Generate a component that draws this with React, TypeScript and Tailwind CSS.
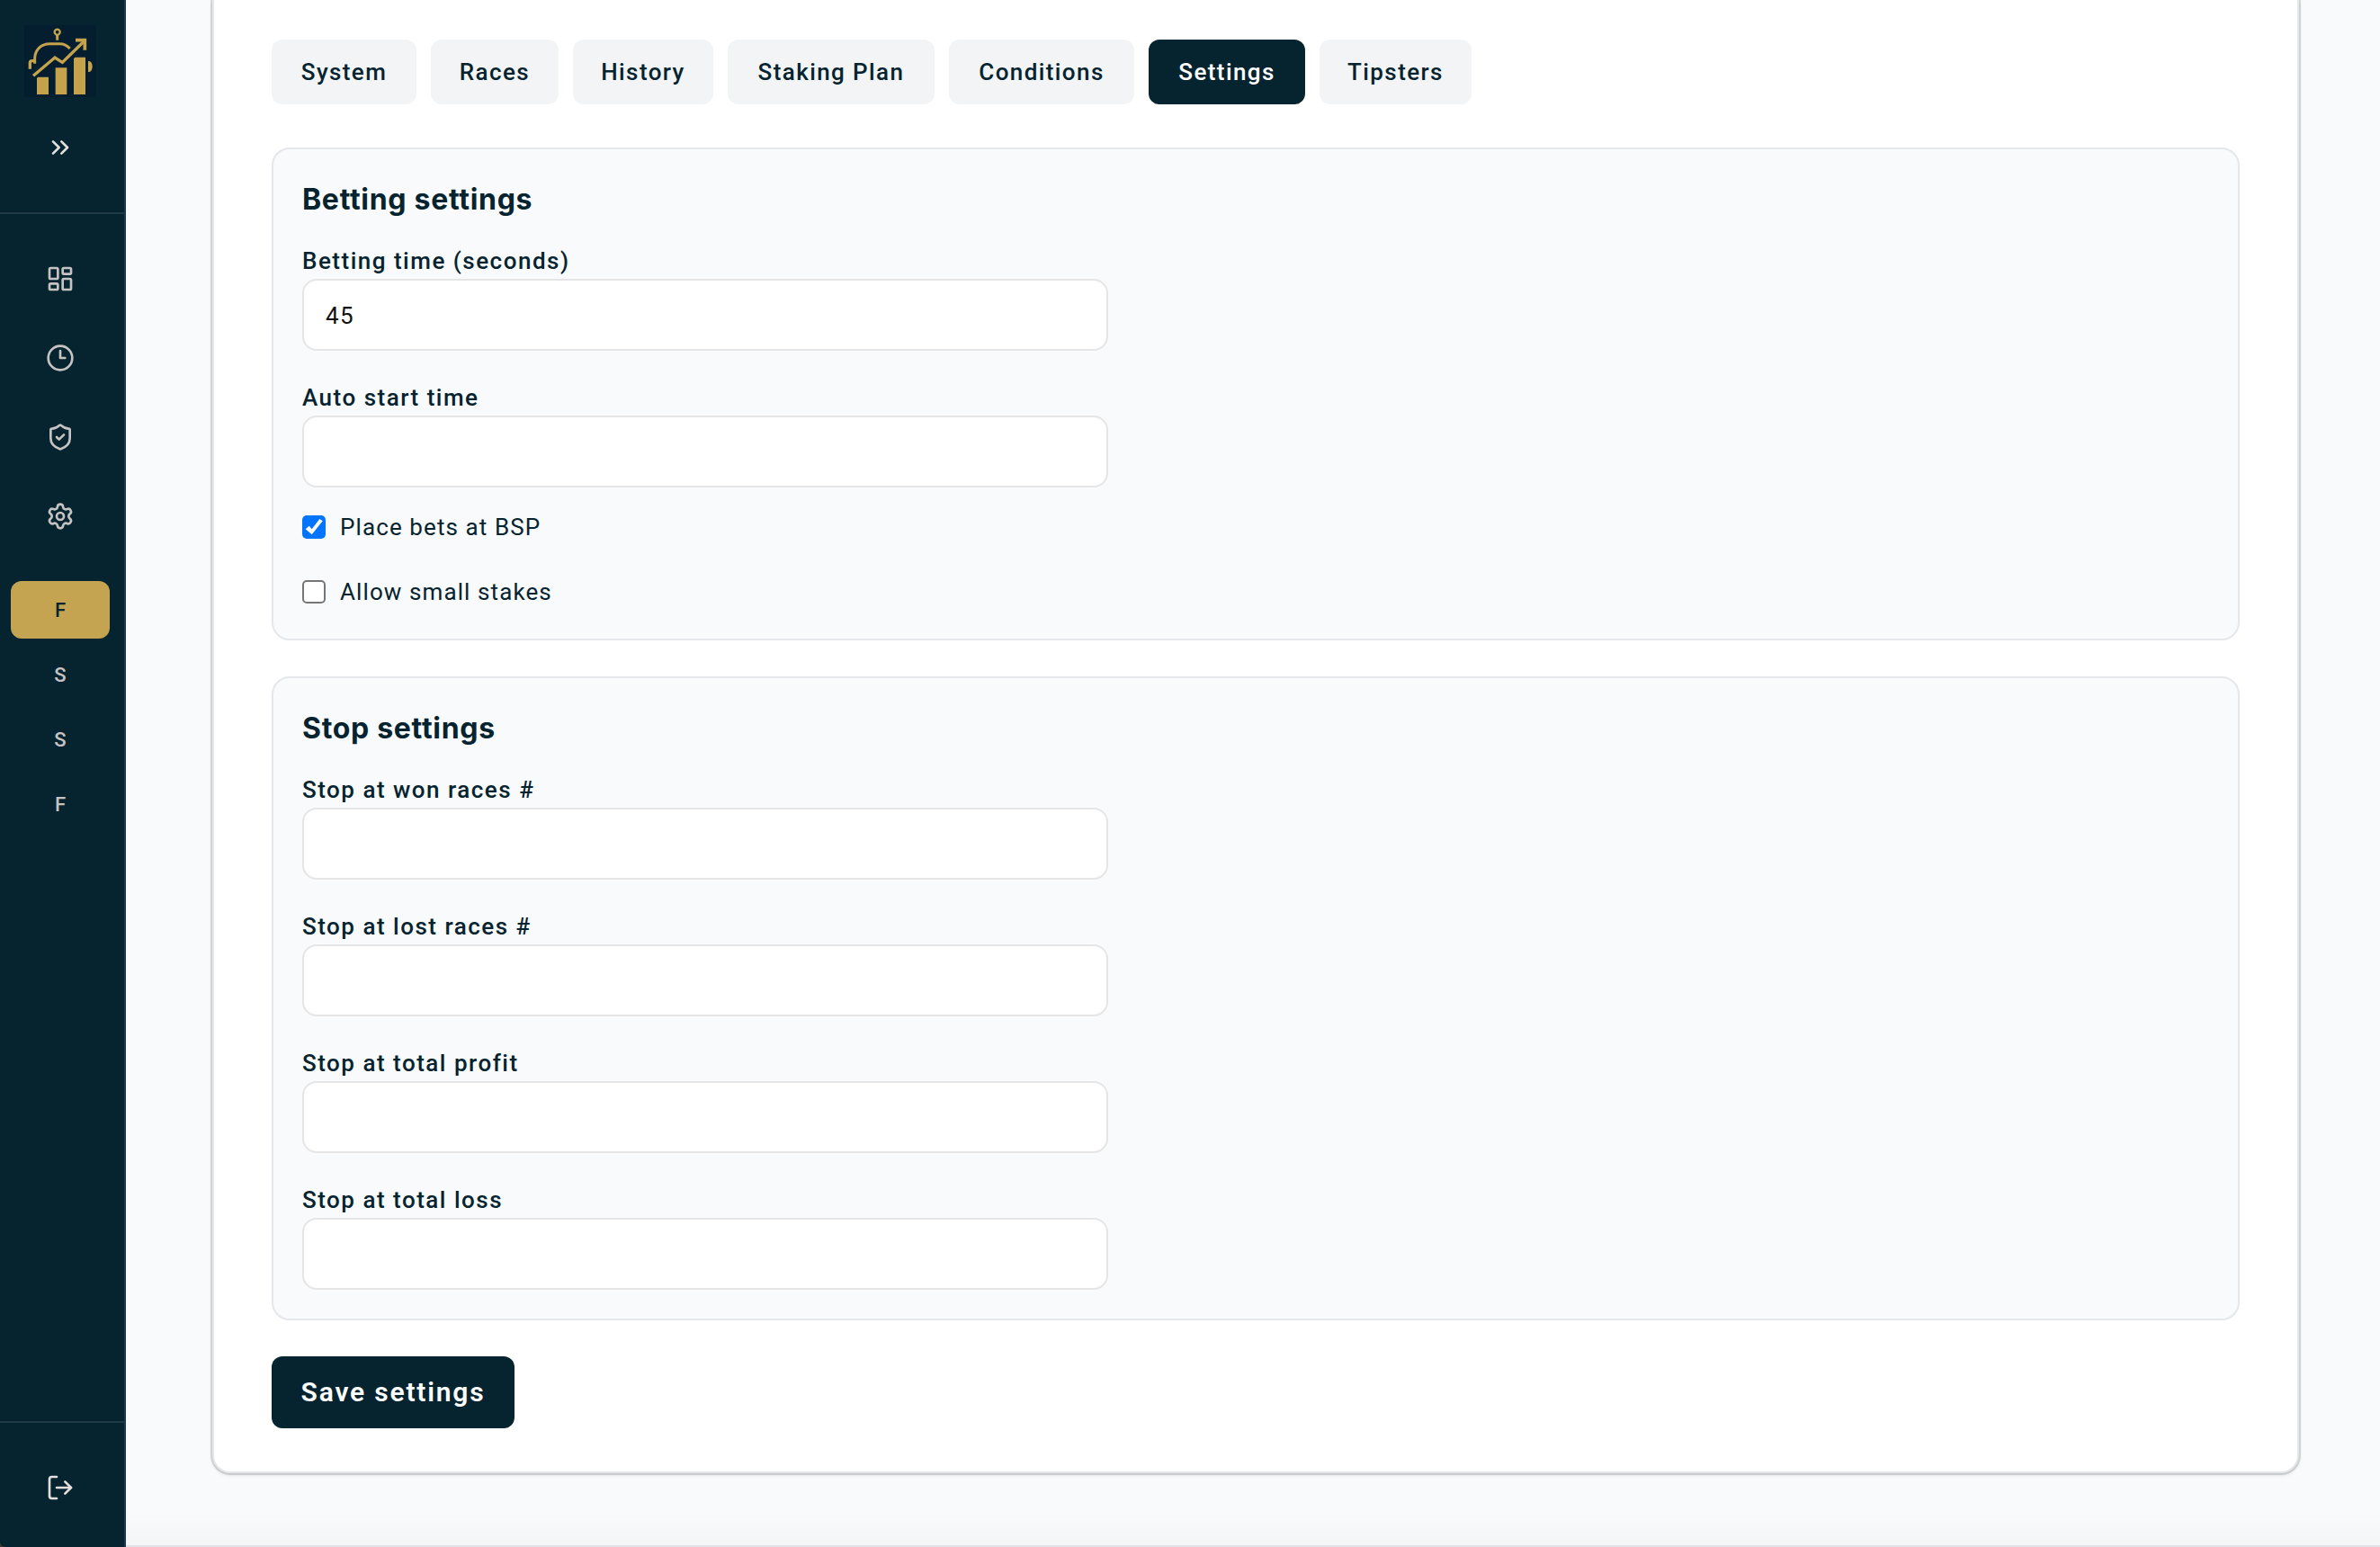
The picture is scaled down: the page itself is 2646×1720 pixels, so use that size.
import { useState } from 'react';
import { ChevronsRight, Clock3, LayoutDashboard, LogOut, Settings, ShieldCheck } from 'lucide-react';

const navIcons = [LayoutDashboard, Clock3, ShieldCheck, Settings];
const systems = ['F', 'S', 'S', 'F'];

const tabs = [
  { label: 'System', width: 'w-[161px]' },
  { label: 'Races', width: 'w-[142px]' },
  { label: 'History', width: 'w-[156px]' },
  { label: 'Staking Plan', width: 'w-[230px]' },
  { label: 'Conditions', width: 'w-[206px]' },
  { label: 'Settings', width: 'w-[174px]' },
  { label: 'Tipsters', width: 'w-[169px]' },
];

function Logo() {
  return (
    <svg viewBox="0 0 240 240" className="size-20 bg-[#041e30]" fill="none" stroke="#c5a34c">
      <circle cx="110" cy="23" r="9" strokeWidth="7" />
      <path d="M110 33V50" strokeWidth="9" />
      <path d="M35 128V108C37 80 58 62 84 62H119C135 62 145 70 152 78" strokeWidth="9" />
      <path d="M39 119H26Q19 119 19 126V146" strokeWidth="10" />
      <path d="M213 120h4q10 3 10 18t-10 18h-4z" fill="#c5a34c" stroke="none" />
      <path d="M30 169L102 108L127 124L199 54" strokeWidth="10" />
      <path d="M171 50H202V83" strokeWidth="11" />
      <path d="M42 176l4-3h35v58H42zM104 142h38v89h-38zM165 111l5-4h34v124h-39z" fill="#c5a34c" stroke="none" />
    </svg>
  );
}

function Sidebar() {
  return (
    <aside className="flex w-[140px] shrink-0 flex-col rounded-bl-md border-r-2 border-[#1f3945] bg-[#062430] text-[#c5c3c1]">
      <div className="flex h-[238px] flex-col items-center gap-10 border-b-2 border-[#1f3945] pt-7 pr-1 text-[#e3dfdc]">
        <Logo />
        <button><ChevronsRight size={32} /></button>
      </div>
      <nav className="flex flex-1 flex-col pt-9 pr-4 pl-3">
        <div className="flex flex-col gap-4">
          {navIcons.map((Icon, i) => (
            <button key={i} className="flex h-[72px] items-center justify-center">
              <Icon size={32} />
            </button>
          ))}
        </div>
        <div className="mt-9 flex flex-col gap-2">
          {systems.map((name, i) => (
            <button
              key={i}
              className={`h-16 rounded-xl text-[22px] font-medium ${i === 0 ? 'bg-[#c4a451] text-[#062430]' : ''}`}
            >
              {name}
            </button>
          ))}
        </div>
      </nav>
      <div className="flex h-[140px] items-center justify-center border-t-2 border-[#1f3945] pt-1.5 pr-1 text-[#e3dfdc]">
        <button><LogOut size={32} /></button>
      </div>
    </aside>
  );
}

function Section({ title, children }: { title: string; children: React.ReactNode }) {
  return (
    <section className="rounded-[20px] border-2 border-[#e5e7eb] bg-[#f9fafc] p-8">
      <h2 className="mb-6 h-12 font-['Inter','Liberation_Sans',sans-serif] text-[32px] leading-[48px] font-bold tracking-[0.7px]">
        {title}
      </h2>
      {children}
    </section>
  );
}

function Field({ label, value = '' }: { label: string; value?: string }) {
  return (
    <label className="block w-[896px]">
      <span className="block h-10 text-[26px] leading-10 font-medium tracking-[1.5px]">{label}</span>
      <input
        defaultValue={value}
        className="block h-20 w-full rounded-2xl border-2 border-[#e5e5e5] bg-white px-6 pt-0.5 text-[26px] tracking-[1.4px] text-[#111]"
      />
    </label>
  );
}

function Checkbox({ label, checked, onChange }: { label: string; checked: boolean; onChange: () => void }) {
  return (
    <button onClick={onChange} className="flex h-10 items-center gap-4 text-[26px] tracking-[1.1px]">
      <span
        className={`size-[26px] rounded-[5px] ${checked ? 'bg-[#0075ff]' : 'border-2 border-[#767676] bg-white'}`}
      >
        {checked && (
          <svg viewBox="0 0 26 26" className="size-[26px]" fill="white">
            <path d="M3.7 15.3L7.7 11.7L10.7 15.3L19.3 4L22.7 6.3L10.7 21.3Z" />
          </svg>
        )}
      </span>
      <span>{label}</span>
    </button>
  );
}

export default function App() {
  const [tab, setTab] = useState('Settings');
  const [bsp, setBsp] = useState(true);
  const [smallStakes, setSmallStakes] = useState(false);

  return (
    <div className="relative flex h-[1720px] w-[2646px] overflow-hidden bg-[#3a3633] font-['Roboto','Liberation_Sans',sans-serif] text-[#062430]">
      <Sidebar />
      <main className="flex-1 bg-[#f9fafc] pr-[90px] pl-24">
        <div className="h-[1638px] rounded-b-[20px] border-x-2 border-b-2 border-[#e5e7eb] bg-white px-16 pt-11 shadow-[0_0_0_2px_rgba(0,0,0,0.12),0_2px_4px_rgba(0,0,0,0.12)]">
          <div className="mb-12 flex gap-4">
            {tabs.map((t) => (
              <button
                key={t.label}
                onClick={() => setTab(t.label)}
                className={`h-[72px] rounded-xl text-[26px] font-medium tracking-[1.4px] whitespace-nowrap ${t.width} ${
                  tab === t.label ? 'bg-[#062430] text-white' : 'bg-[#f3f4f6]'
                }`}
              >
                {t.label}
              </button>
            ))}
          </div>
          <div className="flex flex-col gap-10">
            <Section title="Betting settings">
              <div className="flex flex-col gap-8">
                <Field label="Betting time (seconds)" value="45" />
                <Field label="Auto start time" />
              </div>
              <div className="mt-6 flex flex-col items-start gap-8">
                <Checkbox label="Place bets at BSP" checked={bsp} onChange={() => setBsp(!bsp)} />
                <Checkbox label="Allow small stakes" checked={smallStakes} onChange={() => setSmallStakes(!smallStakes)} />
              </div>
            </Section>
            <Section title="Stop settings">
              <div className="flex flex-col gap-8">
                <Field label="Stop at won races #" />
                <Field label="Stop at lost races #" />
                <Field label="Stop at total profit" />
                <Field label="Stop at total loss" />
              </div>
            </Section>
            <button className="h-20 w-[270px] rounded-xl bg-[#062430] pb-0.5 text-[30px] font-semibold tracking-[1.8px] whitespace-nowrap text-white">
              Save settings
            </button>
          </div>
        </div>
      </main>
      <div className="pointer-events-none absolute right-0 bottom-0 left-[140px] h-10 border-b-2 border-[#e0e2e5] bg-linear-to-b from-transparent to-black/2" />
    </div>
  );
}
